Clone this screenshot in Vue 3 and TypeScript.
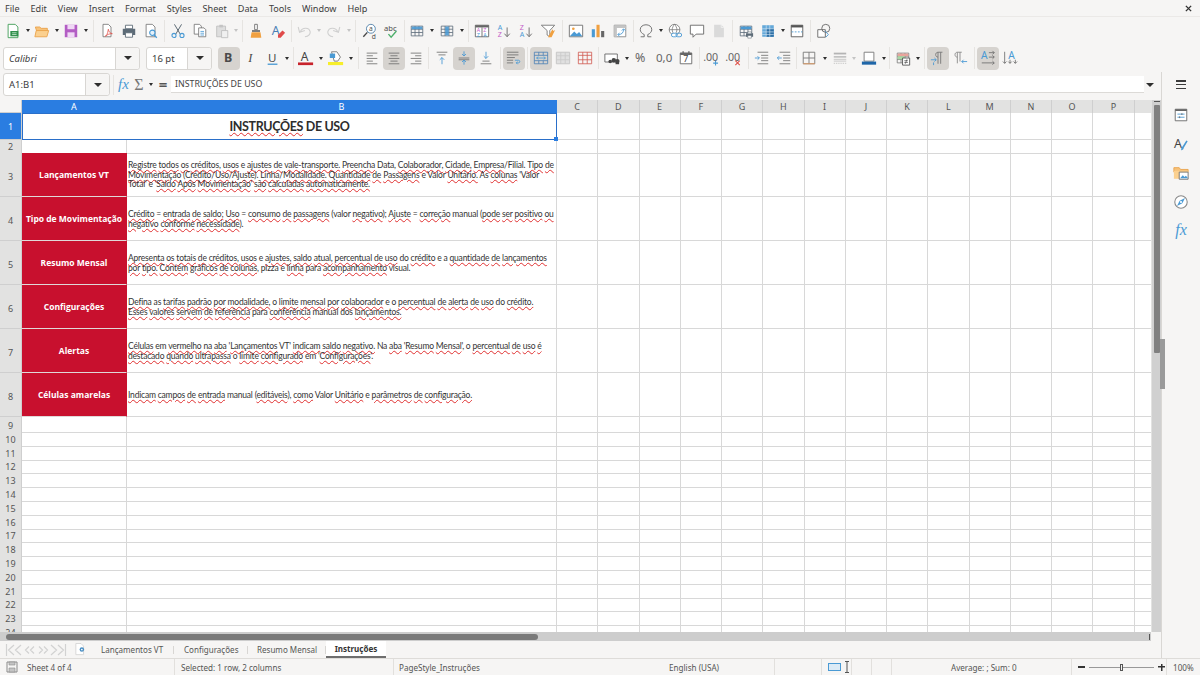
<script setup lang="ts">
type Item = { k: 'b' | 'a' | 's'; i?: string; w: number; on?: boolean; dim?: boolean }
const b = (i: string, w = 22, on = false): Item => ({ k: 'b', i, w, on })
const a = (w = 8, dim = false): Item => ({ k: 'a', w, dim })
const s = (w = 5): Item => ({ k: 's', w })

const D = '#6a6a6a'
const B = '#4a9ad4'
const gridLines = (c: string) =>
  `<path d="M2.5 3.5h13v11h-13zM2.5 7h13M2.5 10.7h13M6.8 3.5v11M11.2 3.5v11" fill="none" stroke="${c}" stroke-width=".9"/>`
const lines = (ys: number[], x1 = 3, x2 = 15, c = D) =>
  ys.map((y) => `<path d="M${x1} ${y}h${x2 - x1}" stroke="${c}" stroke-width=".9" fill="none"/>`).join('')
const label = (t: string, x: number, y: number, size: number, c: string, extra = '') =>
  `<text x="${x}" y="${y}" font-size="${size}" fill="${c}" font-family="Noto Sans, sans-serif" ${extra}>${t}</text>`

const icons: Record<string, string> = {
  new: `<path d="M3.5 1.5h8l3 3v12h-11z" fill="#fff" stroke="#3e9c55"/><path d="M6 9h9v6H6z" fill="#2f8f4b"/><path d="M8 11h5M8 13h5" stroke="#bfe3c8"/>`,
  open: `<path d="M1.5 4.5h5l1.5 1.5h7v3h-12z" fill="#f7c27a" stroke="#e9a24a"/><path d="M1 15.5l1.5-7h14l-2 7z" fill="#fbd08f" stroke="#e9a24a"/>`,
  save: `<path d="M2 2h14v14H2z" fill="#b35dc4"/><path d="M5 2h8v5H5z" fill="#f0d8f5"/><path d="M5 10.5h8V16H5z" fill="#f0d8f5"/>`,
  pdf: `<path d="M4.5 1.5h6l3 3v11h-9z" fill="#fff" stroke="#6f6f6f" stroke-width=".9"/><path d="M7 15c3-2 3-6 3.5-8 .5 3 2 4.5 4.5 5-3 0-5 .5-8 3z" fill="none" stroke="#e0524a" stroke-width=".9"/>`,
  print: `<path d="M5 2.500h8v4H5z" fill="#fff" stroke="#5d6b77"/><path d="M2 6.500h14v7H2z" fill="#5d6b77"/><path d="M5 11h8v5H5z" fill="#fff" stroke="#5d6b77"/>`,
  preview: `<path d="M3.5 1.5h7l3 3v11h-10z" fill="#fff" stroke="#6f6f6f" stroke-width=".9"/><circle cx="10.5" cy="11" r="3" fill="#e5f1fa" stroke="${B}" stroke-width="1.2"/><path d="M12.5 13.5l3 3" stroke="${B}" stroke-width="1.5"/>`,
  cut: `<path d="M5 1.5l6.5 11M13 1.5L6.5 12.5" stroke="#4b5a66"/><circle cx="4.5" cy="14" r="2.3" fill="none" stroke="${B}" stroke-width="1.2"/><circle cx="13.5" cy="14" r="2.3" fill="none" stroke="${B}" stroke-width="1.2"/>`,
  copy: `<path d="M2.5 1.5h6l2 2v9h-8z" fill="#fff" stroke="#6f6f6f" stroke-width=".9"/><path d="M7.5 5.5h6l2 2v8h-8z" fill="#fff" stroke="#6f6f6f" stroke-width=".9"/><path d="M9.5 9.5h4M9.5 11.5h4M9.5 13.5h4" stroke="${B}" stroke-width=".9"/>`,
  paste: `<path d="M3 3.5h10v12H3z" fill="#dedede" stroke="#c0c0c0"/><path d="M6 2h4v3H6z" fill="#c4c4c4"/><path d="M8.5 8.5h7v8h-7z" fill="#f0f0f0" stroke="#c0c0c0"/>`,
  clone: `<path d="M7.5 1.5h3v6h-3z" fill="#fff" stroke="#6f6f6f"/><path d="M4.5 8h9v2h-9z" fill="#6f6f6f"/><path d="M4 10.5h10l1 6H3z" fill="#f0a040"/>`,
  clear: `<text x="2" y="13" font-size="14" fill="#4a7fb5" font-family="Noto Sans, sans-serif">A</text><path d="M9 13.500l5-5 3 2.500-5 5.500H9z" fill="#e04a4a"/>`,
  undo: `<path d="M5 9.5c2-5 10-5 11 .5 0 3-3 5-6 5.5M2.5 4.5l1.500 6 6-2" fill="none" stroke="#cfcfcf" stroke-width="1.2"/>`,
  redo: `<path d="M13 9.5c-2-5-10-5-11 .5 0 3 3 5 6 5.5M15.5 4.5l-1.500 6-6-2" fill="none" stroke="#cfcfcf" stroke-width="1.2"/>`,
  find: `<circle cx="10" cy="6.5" r="5" fill="#fff" stroke="#4d7ea8"/><path d="M6 10.5l-4.500 5" stroke="#444" stroke-width="1.5"/>${label('a', 7.8, 9, 7.5, '#4d4d4d')}${label('d', 11, 17.5, 7.5, '#4d4d4d')}`,
  spell: `${label('abc', 0, 8.5, 8.5, '#4d4d4d')}<path d="M5 12.5l3 3.5 6-7" fill="none" stroke="#4caf6a" stroke-width="1.5"/>`,
  row: `${gridLines('#5a6a78')}<path d="M3 4h12v3H3z" fill="${B}" opacity=".9"/>`,
  col: `${gridLines('#5a6a78')}<path d="M7 4h4v10H7z" fill="${B}" opacity=".9"/>`,
  sort: `<path d="M1.5 2.5h15v13h-15z" fill="#fff" stroke="#666"/><path d="M1.5 2.5h15v2.500h-15z" fill="#666"/><path d="M9 5v10.5" stroke="#666"/>${label('A', 3, 10.5, 6, '#c45ec9')}${label('Z', 3, 15.2, 6, '#4a9ad4')}${label('Z', 10.3, 10.5, 6, '#c45ec9')}${label('A', 10.3, 15.2, 6, '#4a9ad4')}`,
  az: `${label('A', 2, 8, 8, B)}${label('Z', 2, 16, 8, '#c45ec9')}<path d="M12.5 5v10M9.5 12l3 3.5 3-3.5" fill="none" stroke="#666"/>`,
  za: `${label('Z', 2, 8, 8, '#c45ec9')}${label('A', 2, 16, 8, B)}<path d="M12.5 5v10M9.5 12l3 3.5 3-3.5" fill="none" stroke="#666"/>`,
  filter: `<path d="M1.5 2.5h15l-5.500 6v7l-3-2V8.500z" fill="#fff" stroke="#777"/><path d="M9 16l5-9 1 2 2-1-4 8z" fill="#f0a040"/>`,
  image: `<path d="M1.5 2.5h15v13h-15z" fill="#fff" stroke="#6f6f6f"/><circle cx="6" cy="6.5" r="1.5" fill="#f0a040"/><path d="M2 15l5-5.500 3 3 2.500-2.500 3.500 5z" fill="${B}"/>`,
  chart: `<path d="M2 7h3.500v9H2z" fill="${B}"/><path d="M7.300 2h3.500v14H7.300z" fill="#f0a040"/><path d="M12.500 9H16v7h-3.500z" fill="#666"/>`,
  pivot: `<path d="M2.5 2.5h13v13h-13z" fill="#fff" stroke="#888"/><path d="M2.5 2.5h13v3h-13zM2.5 2.5h3v13h-3z" fill="#c4c4c4"/><path d="M7 13c4 0 6-2 6-6M11 8.5l2-2 2 2M8.5 11l-2 2 2 2" fill="none" stroke="${B}"/>`,
  omega: `<path d="M3 15.5h4V13C4.5 12 2.5 9.8 2.5 7.500c0-3.500 3-5.500 6.500-5.500s6.500 2 6.500 5.500c0 2.300-2 4.500-4.500 5.500v2.500h4" fill="none" stroke="#666"/>`,
  link: `<circle cx="8.5" cy="7.5" r="6" fill="#fff" stroke="#6f6f6f" stroke-width=".9"/><path d="M2.5 7.5h12M8.5 1.5c-3.500 4-3.500 8 0 12M8.5 1.5c3.500 4 3.500 8 0 12" fill="none" stroke="#6f6f6f" stroke-width=".8"/><rect x="5" y="11.5" width="6.5" height="4" rx="2" fill="#fff" stroke="${B}"/><rect x="10" y="11.5" width="6.5" height="4" rx="2" fill="none" stroke="${B}"/>`,
  comment: `<path d="M1.5 2.5h15v10H8l-3.500 3.500v-3.500h-3z" fill="#fff" stroke="#666"/>`,
  note: `<path d="M3.5 2h8l3 3v11h-11z" fill="#dadada"/><path d="M11.5 2v3h3" fill="none" stroke="#f0f0f0"/>`,
  header: `${gridLines('#5a6a78')}<path d="M3 4h12v3H3z" fill="${B}"/><path d="M9 11.5h8v4H9z" fill="#5d6b77"/><path d="M11 10h4v2h-4zM11 14h4v3h-4z" fill="#fff" stroke="#5d6b77" stroke-width=".6"/>`,
  freeze: `<path d="M2.5 2.5h13v13h-13z" fill="#4a9ad4" opacity=".85"/><path d="M7 6.5h8.500v9H7z" fill="#2d6fa6"/><path d="M2.5 6.5h13M2.5 10h13M2.5 13h13M7 2.5v13M11 2.5v13" stroke="#d5e7f5" stroke-width=".7"/>`,
  split: `<path d="M2.5 2.5h13v13h-13z" fill="#fff" stroke="#555"/><path d="M2.5 2.5h13V5h-13z" fill="#555"/><path d="M3 10h12" stroke="${B}" stroke-dasharray="2 1.500"/>`,
  shapes: `<path d="M2 7.5h8.500V16H2z" fill="#fff" stroke="#666"/><circle cx="11" cy="6" r="4.5" fill="none" stroke="#666"/><path d="M10 9l4 4-3 3" fill="none" stroke="${B}"/>`,
  bold: label('B', 3.5, 14, 14, '#4a4a4a', 'font-weight="700"'),
  italic: `<text x="6" y="14" font-size="14" fill="#4a4a4a" font-style="italic" font-family="Liberation Serif, serif">I</text>`,
  under: `${label('U', 3.5, 13, 13, '#4a4a4a')}<path d="M3 16h11" stroke="${B}" stroke-width="1.5"/>`,
  fcolor: `${label('A', 3, 12.5, 13.5, '#444')}<path d="M0 14h17v3H0z" fill="#c8232c"/>`,
  hl: `<path d="M4 2h6l4 6-3 4.500H7z" fill="#fff" stroke="#777"/><path d="M2 4h6v5H2z" fill="${B}"/><path d="M0 13.500h17V17H0z" fill="#f7ee2a"/>`,
  left: `${lines([3.5, 9.5, 15.5])}${lines([6.5, 12.5], 3, 10)}`,
  center: `${lines([3.5, 9.5, 15.5])}${lines([6.5, 12.5], 5, 13)}`,
  right: `${lines([3.5, 9.5, 15.5])}${lines([6.5, 12.5], 8, 15)}`,
  vtop: `${lines([2.5])}${lines([5.5], 5, 13)}<path d="M9 16V8.500M6.500 11L9 8.500l2.500 2.500" fill="none" stroke="${B}"/>`,
  vmid: `${lines([9, 11])}<path d="M9 1.500v5M6.800 4.500L9 6.800l2.200-2.300M9 16.500v-5M6.800 13.500L9 11.200l2.200 2.300" fill="none" stroke="${B}"/>`,
  vbot: `${lines([15.5])}${lines([12.5], 5, 13)}<path d="M9 2v7.500M6.500 7L9 9.500 11.500 7" fill="none" stroke="${B}"/>`,
  wrap: `${lines([2.5, 5.5], 1, 14)}${lines([8.5], 1, 10)}${lines([11.5, 14.5], 1, 8)}<path d="M10 11.500h4c2 0 2 3 0 3h-2M13 13l-1.500 1.500L13 16" fill="none" stroke="${B}"/>`,
  merge: `<path d="M1.5 2.5h15v13h-15zM1.5 6h15M1.5 12h15M6.500 2.500V6M11.500 2.500V6M6.500 12v3.500M11.500 12v3.500" fill="none" stroke="#4a7fb5" stroke-width=".9"/><path d="M4 9h10M4 9l2-1.500M4 9l2 1.500M14 9l-2-1.500M14 9l-2 1.500" stroke="${B}" fill="none" stroke-width=".9"/>`,
  unmerge: `<path d="M1.5 2.5h15v13h-15z" fill="#e0e0e0" stroke="#c4c4c4"/><path d="M1.5 6.5h15M1.5 11h15M6.500 2.500v13M11.500 2.500v13" stroke="#cacaca"/>`,
  split2: `<path d="M1.5 2.5h15v13h-15zM1.5 6h15M6.500 2.500v13M11.500 2.500v13M1.5 11h15" fill="none" stroke="#d0584f" stroke-width=".9"/>`,
  curr: `<path d="M1 4.5h14v9H1z" fill="#fff" stroke="#666"/><circle cx="11" cy="11.500" r="2.500" fill="#444"/><circle cx="15" cy="12.500" r="2.500" fill="#444"/><path d="M13 13h4v3h-4z" fill="#444"/><circle cx="7" cy="13" r="2" fill="#444"/>`,
  pct: label('%', 1, 14, 14, '#666'),
  num: label('0,0', 0, 14, 13, '#666'),
  date: `<path d="M2.5 3.5h13v12h-13z" fill="#fff" stroke="#666"/><path d="M2.5 3h13v2.500h-13zM5 1.500h1.500v3H5zM11.500 1.500H13v3h-1.500z" fill="#666"/>${label('7', 6, 14, 10, '#444')}`,
  addd: `${label('.00', -1, 12, 12, '#666')}<path d="M13 12v5.500M10.300 14.800h5.500" stroke="${B}" stroke-width="1.2"/>`,
  deld: `${label('.00', -1, 12, 12, '#666')}<path d="M10.500 12l5 5M15.500 12l-5 5" stroke="#e0524a" stroke-width="1.2"/>`,
  indent: `${lines([2.5, 15.5], 4, 16)}${lines([6, 9, 12], 8, 16)}<path d="M1 9h5M4 7l2 2-2 2" fill="none" stroke="${B}"/>`,
  dedent: `${lines([2.5, 15.5], 4, 16)}${lines([6, 9, 12], 8, 16)}<path d="M1.500 9h5M3.500 7l-2 2 2 2" fill="none" stroke="${B}"/>`,
  border: `<path d="M2.5 2.5h13v13h-13zM2.5 9h13M9 2.500v13" fill="none" stroke="#777"/><path d="M2.5 15.5h13" stroke="#e39a5c"/>`,
  lstyle: `<path d="M2 3h14v2H2z" fill="#b4b4b4"/><path d="M2 7h14v1.500H2z" fill="#b4b4b4"/><path d="M2 10.500h14M2 12.500h14" stroke="#c4c4c4"/><path d="M2 15h14" stroke="#c4c4c4" stroke-dasharray="1.500 1"/>`,
  bcolor: `<path d="M3.5 2.5h11v10h-11z" fill="#fff" stroke="#777"/><path d="M1 13h16v3.500H1z" fill="#1f66a8"/>`,
  cond: `${gridLines('#777')}<path d="M3 4h12v3H3z" fill="#e9a49c"/><path d="M3 7h8v3.500H3z" fill="#a9d8a4"/><path d="M8.500 9h8v8h-8z" fill="#fff" stroke="#555"/><path d="M10.500 12h4M10.500 14h4M13.500 10.500l-2 5" stroke="#555" stroke-width=".8"/>`,
  ltr: `<path d="M9 15.500V2.500h5M12 2.500v13M9 2.500C5.500 2.500 5.500 8 9 8" fill="none" stroke="#777"/><path d="M1 11h6M5 9l2 2-2 2M4 14v3" fill="none" stroke="${B}"/>`,
  rtl: `<path d="M6 15V2.500h5M9 2.500V13M6 2.500C2.500 2.500 2.500 8 6 8" fill="none" stroke="#888"/><path d="M11 13h6M13 11l-2 2 2 2" fill="none" stroke="${B}"/>`,
  ah: `${label('A', 1, 10, 11.5, B)}<path d="M10 3h6M14 1l2 2-2 2M10 8h6M14 6l2 2-2 2M2 14.500h14M14 12.500l2 2-2 2" fill="none" stroke="#666" stroke-width=".9"/>`,
  av: `${label('A', 7, 10, 11.5, B)}<path d="M3 2v13M1 13l2 2 2-2M9 11v4M7 13l2 2 2-2M15 11v4M13 13l2 2 2-2" fill="none" stroke="#666" stroke-width=".9"/>`,
  sideProps: `<path d="M2.5 2.5h13v13h-13z" fill="#fff" stroke="#666"/><path d="M2.5 2.5h13v2h-13z" fill="#666"/><path d="M5 8h8M5 11.500h8" stroke="${B}"/><path d="M10 7v2M7.500 10.500v2" stroke="#666"/>`,
  sideStyles: `${label('A', 1, 13, 14, '#444')}<path d="M9 16c2 0 3-1 3-2.500L16.500 6 15 5l-4.500 7C9 12.500 9.500 15 9 16z" fill="${B}"/>`,
  sideGallery: `<path d="M1 3h6l1.500 2h8.500v3H1z" fill="#f7c27a" stroke="#e9a24a"/><path d="M1 6.500h16v9H1z" fill="#fbd08f"/><path d="M7 8h10v8H7z" fill="#fff" stroke="#6f6f6f"/><path d="M8 15l3-3.500 2 2 1.500-1.500 2.500 3z" fill="${B}"/>`,
  sideNav: `<circle cx="9" cy="9" r="7" fill="#fff" stroke="#888" stroke-width="1.2"/><path d="M13.500 4.500L10.500 10.500 4.500 13.500 7.500 7.500z" fill="${B}"/><circle cx="9" cy="9" r="1.2" fill="#fff"/>`,
}

const tb1: Item[] = [
  b('new'), a(7), b('open'), a(7), b('save'), a(8), s(6), b('pdf'), b('print'), b('preview'), s(5),
  b('cut'), b('copy'), b('paste'), a(6, true), s(6), b('clone'), b('clear'), s(4),
  b('undo'), a(8, true), b('redo'), a(7, true), s(7), b('find'), b('spell'), s(3),
  b('row'), a(8), b('col'), a(7), s(6), b('sort'), b('az'), b('za'), b('filter'), s(6),
  b('image'), b('chart'), b('pivot'), s(4), b('omega'), a(7), b('link'), b('comment'), b('note'), s(5),
  b('header'), b('freeze'), a(7), b('split'), s(5), b('shapes'),
]
const tb2: Item[] = [
  b('bold', 22, true), b('italic'), b('under', 21), a(8), s(4), b('fcolor'), a(8), b('hl'), a(8), s(6),
  b('left'), b('center', 22, true), b('right', 21), s(5), b('vtop'), b('vmid', 22, true), b('vbot'), s(6),
  b('wrap', 22, true), s(5), b('merge', 22, true), b('unmerge'), b('split2'), s(5), b('curr'), a(8), b('pct'), b('num'), b('date'), s(4),
  b('addd'), b('deld'), s(6), b('indent'), b('dedent'), s(3), b('border'), a(9), b('lstyle', 21), a(8, true), b('bcolor'), a(7), s(5),
  b('cond'), a(8), s(5), b('ltr', 22, true), b('rtl'), s(6), b('ah', 22, true), b('av'),
]

const menus = ['File', 'Edit', 'View', 'Insert', 'Format', 'Styles', 'Sheet', 'Data', 'Tools', 'Window', 'Help']
const cols = ['C', 'D', 'E', 'F', 'G', 'H', 'I', 'J', 'K', 'L', 'M', 'N', 'O', 'P']

type Seg = { t: string; bad: boolean }
const parse = (line: string): Seg[] =>
  line.split(/(\{[^}]*\})/).filter(Boolean).map((p) =>
    p.startsWith('{') ? { t: p.slice(1, -1), bad: true } : { t: p, bad: false })

const info: { n: number; label: string; text: string[] }[] = [
  { n: 3, label: 'Lançamentos VT', text: [
    '{Registre} {todos} {os} {créditos,} {usos} e {ajustes} {de} {vale-transporte.} {Preencha} Data, {Colaborador,} {Cidade,} {Empresa}/Filial. {Tipo} {de}',
    '{Movimentação} ({Crédito}/{Uso}/{Ajuste}). {Linha}/{Modalidade.} {Quantidade} {de} {Passagens} e Valor {Unitário.} As {colunas} \'Valor',
    'Total\' e \'{Saldo} {Após} {Movimentação}\' {são} {calculadas} {automaticamente.}',
  ] },
  { n: 4, label: 'Tipo de Movimentação', text: [
    '{Crédito} = {entrada} {de} {saldo;} {Uso} = {consumo} {de} {passagens} (valor {negativo}); {Ajuste} = {correção} manual ({pode} {ser} {positivo} {ou}',
    '{negativo} {conforme} {necessidade}).',
  ] },
  { n: 5, label: 'Resumo Mensal', text: [
    '{Apresenta} {os} {totais} {de} {créditos,} {usos} e {ajustes,} {saldo} {atual,} {percentual} {de} {uso} do {crédito} e a {quantidade} {de} {lançamentos}',
    '{por} {tipo.} {Contém} {gráficos} {de} {colunas,} pizza e {linha} para {acompanhamento} visual.',
  ] },
  { n: 6, label: 'Configurações', text: [
    '{Defina} as {tarifas} {padrão} {por} {modalidade,} o {limite} {mensal} {por} {colaborador} e o {percentual} {de} {alerta} {de} {uso} do {crédito.}',
    '{Esses} {valores} {servem} {de} {referência} para {conferência} manual dos {lançamentos.}',
  ] },
  { n: 7, label: 'Alertas', text: [
    '{Células} em {vermelho} {na} {aba} \'{Lançamentos} VT\' {indicam} {saldo} {negativo.} Na {aba} \'{Resumo} {Mensal}\', o {percentual} {de} {uso} {é}',
    '{destacado} {quando} {ultrapassa} o {limite} {configurado} em \'{Configurações}\'.',
  ] },
  { n: 8, label: 'Células amarelas', text: [
    '{Indicam} {campos} {de} {entrada} manual ({editáveis}), {como} Valor {Unitário} e {parâmetros} {de} {configuração.}',
  ] },
]
const emptyRows = [9, 10, 11, 12, 13, 14, 15, 16, 17, 18, 19, 20, 21, 22, 23, 24]
const sideIcons = ['sideProps', 'sideStyles', 'sideGallery', 'sideNav']
</script>

<template>
  <div class="app">
    <div class="menubar">
      <span v-for="m in menus" :key="m" class="menu">{{ m }}</span>
      <svg class="close" viewBox="0 0 8 8"><path d="M1 1l6 6M7 1L1 7" stroke="#333" stroke-width="1.6" fill="none"/></svg>
    </div>

    <div class="tb tb1">
      <template v-for="(it, n) in tb1" :key="n">
        <span v-if="it.k === 's'" class="slot" :style="{ width: it.w + 'px' }"><i class="sep"></i></span>
        <span v-else-if="it.k === 'a'" class="slot" :style="{ width: it.w + 'px' }"><i class="arrow" :class="{ dim: it.dim }"></i></span>
        <span v-else class="slot btn" :class="{ on: it.on }" :style="{ width: it.w + 'px' }">
          <svg class="ic" viewBox="0 0 18 18" v-html="icons[it.i as string]"></svg>
        </span>
      </template>
    </div>

    <div class="tb tb2">
      <div class="combo font"><span class="val italic">Calibri</span><span class="drop"><i class="arrow big"></i></span></div>
      <div class="combo size"><span class="val">16 pt</span><span class="drop"><i class="arrow big"></i></span></div>
      <template v-for="(it, n) in tb2" :key="n">
        <span v-if="it.k === 's'" class="slot" :style="{ width: it.w + 'px' }"><i class="sep"></i></span>
        <span v-else-if="it.k === 'a'" class="slot" :style="{ width: it.w + 'px' }"><i class="arrow" :class="{ dim: it.dim }"></i></span>
        <span v-else class="slot btn" :class="{ on: it.on }" :style="{ width: it.w + 'px' }">
          <svg class="ic" viewBox="0 0 18 18" v-html="icons[it.i as string]"></svg>
        </span>
      </template>
    </div>

    <div class="work">
      <div class="left">
        <div class="formula">
          <div class="combo name"><span class="val">A1:B1</span><span class="drop"><i class="arrow big"></i></span></div>
          <i class="sep fsep"></i>
          <span class="fx">fx</span>
          <span class="sigma">Σ</span>
          <i class="arrow"></i>
          <span class="eq">=</span>
          <div class="finput">INSTRUÇÕES DE USO</div>
          <i class="arrow big farrow"></i>
        </div>

        <div class="sheet-area">
          <div class="sheet">
            <div class="row head">
              <div class="rh corner"></div>
              <div class="ch active">A</div>
              <div class="ch active">B</div>
              <div v-for="c in cols" :key="c" class="ch">{{ c }}</div>
              <div class="ch end"></div>
            </div>

            <div class="row r1">
              <div class="rh active">1</div>
              <div class="title"><span class="bad">INSTRUÇÕES</span>&nbsp;DE USO<i class="handle"></i></div>
              <div v-for="c in cols" :key="c" class="cell"></div>
              <div class="cell end"></div>
            </div>

            <div class="row r2">
              <div class="rh">2</div>
              <div class="cell"></div>
              <div class="cell"></div>
              <div v-for="c in cols" :key="c" class="cell"></div>
              <div class="cell end"></div>
            </div>

            <div v-for="r in info" :key="r.n" class="row rtall">
              <div class="rh low">{{ r.n }}</div>
              <div class="cell red">{{ r.label }}</div>
              <div class="cell desc">
                <div v-for="(line, li) in r.text" :key="li" class="dline">
                  <template v-for="(seg, si) in parse(line)" :key="si"><span :class="{ bad: seg.bad }">{{ seg.t }}</span></template>
                </div>
              </div>
              <div v-for="c in cols" :key="c" class="cell"></div>
              <div class="cell end"></div>
            </div>

            <div v-for="n in emptyRows" :key="n" class="row rsmall">
              <div class="rh low1">{{ n }}</div>
              <div class="cell"></div>
              <div class="cell"></div>
              <div v-for="c in cols" :key="c" class="cell"></div>
              <div class="cell end"></div>
            </div>
          </div>

          <div class="vscroll">
            <i class="vcap"></i>
            <i class="vthumb"></i>
          </div>
        </div>

        <div class="hscroll"><i class="hthumb"></i><i class="hgrip"></i></div>

        <div class="tabs">
          <div class="nav">
            <svg class="nav-ic" viewBox="0 0 62 14">
              <path d="M1.5 1v12M9 2L3.5 7 9 12M16 2l-5.500 5 5.500 5M24 3.500L20.500 7l3.500 3.500M29 3.500L25.500 7l3.500 3.500M34 3.500L37.500 7 34 10.500M39 3.500L42.500 7 39 10.500M46 2l5.500 5-5.500 5M53 2l5.500 5-5.500 5M60.500 1v12" fill="none" stroke="#d2d2d2" stroke-width="1.2"/>
            </svg>
          </div>
          <svg class="newsheet" viewBox="0 0 14 16">
            <path d="M1 1h6l3 3v10H1z" fill="#fff" stroke="#d4d4d4"/>
            <circle cx="8" cy="8" r="2.6" fill="#4a8fc4"/>
            <circle cx="8" cy="8" r="1" fill="#fff"/>
          </svg>
          <span class="tab t1">Lançamentos VT</span><i class="tsep"></i>
          <span class="tab t2">Configurações</span><i class="tsep"></i>
          <span class="tab t3">Resumo Mensal</span><i class="tsep"></i>
          <span class="tab cur">Instruções</span>
        </div>
      </div>

      <div class="sidebar">
        <div class="burger"><i></i><i></i><i></i></div>
        <span v-for="si in sideIcons" :key="si" class="side-btn">
          <svg class="ic" viewBox="0 0 18 18" v-html="icons[si]"></svg>
        </span>
        <span class="side-fx">fx</span>
        <i class="grip"></i>
      </div>
    </div>

    <div class="status">
      <span class="st s-save">
        <svg class="st-ic" viewBox="0 0 12 12"><path d="M1 1h10v10H1z" fill="none" stroke="#8a8a8a"/><path d="M3 1h6v3H3zM3 7h6v4H3z" fill="#c4c4c4" stroke="#8a8a8a" stroke-width=".6"/></svg>
      </span>
      <span class="st s-sheet">Sheet 4 of 4</span>
      <span class="st s-sel">Selected: 1 row, 2 columns</span>
      <span class="st s-page">PageStyle_Instruções</span>
      <span class="st s-lang">English (USA)</span>
      <span class="st s-ins"></span>
      <span class="st s-mode">
        <i class="mode-rect"></i><svg class="cursor" viewBox="0 0 6 12"><path d="M1 .5h4M3 .5v11M1 11.500h4" fill="none" stroke="#555"/></svg>
      </span>
      <span class="st s-e1"></span>
      <span class="st s-e2"></span>
      <span class="st s-sum">Average: ; Sum: 0</span>
      <span class="st s-zoom">
        <i class="minus"></i>
        <span class="track"><i class="knob"></i></span>
        <i class="plus"></i>
      </span>
      <span class="st s-pct">100%</span>
    </div>
  </div>
</template>

<style>
html, body { margin: 0; padding: 0; background: #f6f5f4; }
</style>

<style scoped>
.app {
  width: 1200px;
  height: 675px;
  overflow: hidden;
  display: flex;
  flex-direction: column;
  background: #f6f5f4;
  color: #3d3d3d;
  font-family: "Noto Sans", "Open Sans", sans-serif;
  font-size: 9.5px;
}
i { display: block; font-style: normal; }

.menubar {
  height: 16px;
  flex: none;
  display: flex;
  align-items: center;
  gap: 11px;
  padding: 0 5px;
  border-bottom: 1px solid #ebe9e7;
  font-size: 9.1px;
}
.close { margin-left: auto; width: 7px; height: 7px; margin-right: 3px; }

.tb { display: flex; align-items: center; flex: none; }
.tb1 { height: 27px; padding-left: 2px; }
.tb2 { height: 28px; padding-left: 3px; }
.slot { display: flex; align-items: center; justify-content: center; flex: none; height: 23px; }
.btn { border-radius: 4px; }
.btn.on { background: #d6d3cf; }
.ic { width: 16px; height: 16px; display: block; overflow: visible; }
.sep { width: 1px; height: 22px; background: #e6e4e1; }
.arrow { width: 0; height: 0; border-left: 2.5px solid transparent; border-right: 2.5px solid transparent; border-top: 3px solid #2e2e2e; flex: none; }
.arrow.dim { border-top-color: #c4c4c4; }
.arrow.big { border-left-width: 4px; border-right-width: 4px; border-top-width: 4px; }

.combo {
  display: flex;
  height: 23px;
  flex: none;
  border: 1px solid #d8d6d3;
  border-radius: 3px;
  background: #fff;
  box-sizing: border-box;
}
.combo .val { flex: 1; display: flex; align-items: center; padding-left: 5px; font-size: 9.5px; }
.italic { font-style: italic; }
.drop { width: 23px; display: flex; align-items: center; justify-content: center; background: #f6f5f4; border-left: 1px solid #d8d6d3; border-radius: 0 3px 3px 0; }
.font { width: 137px; margin-right: 6px; }
.size { width: 66px; margin-right: 6px; }
.name { width: 107px; margin-left: 3px; }

.work { flex: 1; display: flex; min-height: 0; }
.left { width: 1161px; flex: none; display: flex; flex-direction: column; }

.formula { height: 28px; flex: none; display: flex; align-items: center; box-sizing: border-box; padding-bottom: 3px; }
.fsep { margin-left: 3px; margin-right: 1px; height: 20px; }
.fx { width: 17px; font-family: "Liberation Serif", serif; font-style: italic; font-size: 15px; color: #4a9ad4; text-align: center; margin-right: 1px; }
.sigma { width: 12px; font-family: "Liberation Serif", serif; font-size: 16px; color: #777; text-align: center; margin-right: 4px; }
.eq { width: 12px; margin-left: 4px; margin-right: 2px; font-size: 15px; line-height: 15px; text-align: center; color: #555; font-weight: 700; }
.finput { width: 973px; height: 17px; box-sizing: border-box; background: #fff; border-bottom: 1px solid #dcdad7; display: flex; align-items: center; padding-left: 4px; font-size: 8.8px; color: #444; }
.farrow { margin-left: 2px; }

.sheet-area { height: 532px; flex: none; display: flex; overflow: hidden; }
.sheet { width: 1151px; flex: none; overflow: hidden; background: #fff; }
.row {
  display: grid;
  grid-template-columns: 22px 105px 430px repeat(14, 41.25px) 1fr;
}
.head { height: 13px; }
.r1 { height: 27px; }
.r2 { height: 13px; }
.rtall { height: 44px; }
.rsmall { height: 13.8px; }

.rh {
  background: #e2e2e1;
  border-right: 1px solid #cfcfcf;
  border-bottom: 1px solid #cfcfcf;
  box-sizing: border-box;
  display: flex;
  align-items: center;
  justify-content: center;
  font-size: 9px;
  color: #555;
}
.rh.low { padding-top: 3px; }
.rh.low1 { padding-top: 2px; }
.rh.corner { background: #f6f5f4; }
.rh.active { background: #2a7de1; color: #fff; }
.ch {
  background: #e2e2e1;
  border-right: 1px solid #cfcfcf;
  box-sizing: border-box;
  display: flex;
  align-items: center;
  justify-content: center;
  font-size: 9px;
  color: #555;
}
.ch.active { background: #2a7de1; color: #fff; border-right-color: #2a7de1; }
.ch.end { border-right: none; }

.cell {
  border-right: 1px solid #d8d8d8;
  border-bottom: 1px solid #d8d8d8;
  box-sizing: border-box;
}
.cell.end { border-right: none; }
.title {
  grid-column: span 2;
  border: 1px solid #2a6fc9;
  box-sizing: border-box;
  display: flex;
  align-items: center;
  justify-content: center;
  position: relative;
  font-family: Lato, "Open Sans", sans-serif;
  font-weight: 700;
  font-size: 12.5px;
  letter-spacing: -0.35px;
  color: #2d2d2d;
}
.handle { position: absolute; right: -2px; bottom: -2px; width: 4px; height: 4px; background: #2a7de1; }
.bad {
  text-decoration: underline wavy #e03030;
  text-decoration-thickness: 1px;
  text-underline-offset: 1px;
}
.red {
  background: #c8102e;
  border-right: 1px solid #c8102e;
  border-bottom: 1px solid #e0d8d8;
  color: #fff;
  font-family: "Open Sans", "Noto Sans", sans-serif;
  font-weight: 700;
  font-size: 8.5px;
  display: flex;
  align-items: center;
  justify-content: center;
  padding-bottom: 1px;
  white-space: nowrap;
}
.desc {
  display: flex;
  flex-direction: column;
  justify-content: center;
  padding-left: 1px;
  padding-top: 2px;
  font-family: Lato, "Open Sans", sans-serif;
  font-size: 8.5px;
  letter-spacing: -0.2px;
  line-height: 9.5px;
  color: #333;
}
.dline { white-space: pre; }

.vscroll { flex: 1; background: #d0d0d0; display: flex; flex-direction: column; align-items: center; border-left: 1px solid #e2e2e1; }
.vcap { width: 6px; height: 1px; background: #555; margin-top: 1px; }
.vthumb { width: 6px; height: 248px; background: #808080; margin-top: 3px; border-radius: 1px; }

.hscroll { height: 9px; flex: none; background: #cdcdcd; display: flex; align-items: center; padding-left: 6px; width: 1151px; box-sizing: border-box; }
.hthumb { width: 532px; height: 6px; background: #7a7a7a; border-radius: 3px; }
.hgrip { width: 1px; height: 6px; background: #555; margin-left: auto; margin-right: 1px; }

.tabs { height: 17px; flex: none; display: flex; align-items: center; font-size: 8.05px; color: #555; }
.nav { width: 72px; padding-left: 5px; box-sizing: border-box; flex: none; display: flex; }
.nav-ic { width: 62px; height: 14px; }
.newsheet { width: 12px; height: 15px; margin-left: 3px; flex: none; }
.tab { display: flex; align-items: center; height: 17px; flex: none; white-space: nowrap; }
.t1 { margin-left: 14px; width: 72px; }
.t2 { margin-left: 10px; width: 63px; }
.t3 { margin-left: 9px; width: 68px; }
.tsep { width: 1px; height: 8px; background: #d8d6d3; flex: none; }
.cur { width: 60px; justify-content: center; font-weight: 700; background: #fff; border-bottom: 2px solid #6e6e6e; box-sizing: border-box; color: #333; }

.sidebar { flex: 1; border-left: 1px solid #d9d7d4; position: relative; display: flex; flex-direction: column; align-items: center; background: #f6f5f4; }
.burger { width: 10px; height: 9px; margin-top: 8px; display: flex; flex-direction: column; justify-content: space-between; }
.burger i { height: 1.5px; background: #3b3b3b; }
.side-btn { width: 16px; height: 16px; margin-top: 13px; }
.burger + .side-btn { margin-top: 18px; }
.side-fx { font-family: "Liberation Serif", serif; font-style: italic; font-size: 16px; color: #4a9ad4; line-height: 18px; margin-top: 11px; }
.grip { position: absolute; left: -2px; top: 267px; width: 5px; height: 50px; background: #9a9a9a; }

.status { height: 17px; flex: none; display: flex; align-items: center; border-top: 1px solid #dedcd9; box-sizing: border-box; font-size: 8.1px; color: #555; }
.st { height: 100%; display: flex; align-items: center; box-sizing: border-box; border-right: 1px solid #e2e0dd; flex: none; white-space: nowrap; }
.s-save { width: 24px; justify-content: center; border-right: none; }
.st-ic { width: 12px; height: 12px; }
.s-sheet { width: 151px; padding-left: 3px; }
.s-sel { width: 219px; padding-left: 6px; }
.s-page { width: 197px; padding-left: 5px; border-right: none; }
.s-lang { width: 184px; padding-left: 78px; }
.s-ins { width: 47px; }
.s-mode { width: 30px; padding-left: 6px; gap: 3px; }
.mode-rect { width: 11px; height: 6px; border: 1px solid #4a9ad4; background: #dcebf6; }
.cursor { width: 6px; height: 12px; }
.s-e1 { width: 20px; }
.s-e2 { width: 20px; }
.s-sum { width: 180px; padding-left: 59px; }
.s-zoom { width: 95px; padding-left: 6px; gap: 4px; }
.minus { width: 7px; height: 1.5px; background: #333; }
.plus { width: 7px; height: 7px; background: linear-gradient(#333, #333) center / 7px 1.5px no-repeat, linear-gradient(#333, #333) center / 1.5px 7px no-repeat; }
.track { width: 65px; height: 1px; background: #999; display: flex; justify-content: center; }
.knob { width: 3px; height: 7px; margin-top: -3px; border: 1px solid #555; background: #f6f5f4; box-sizing: border-box; }
.s-pct { border-right: none; padding-left: 6px; }
</style>
